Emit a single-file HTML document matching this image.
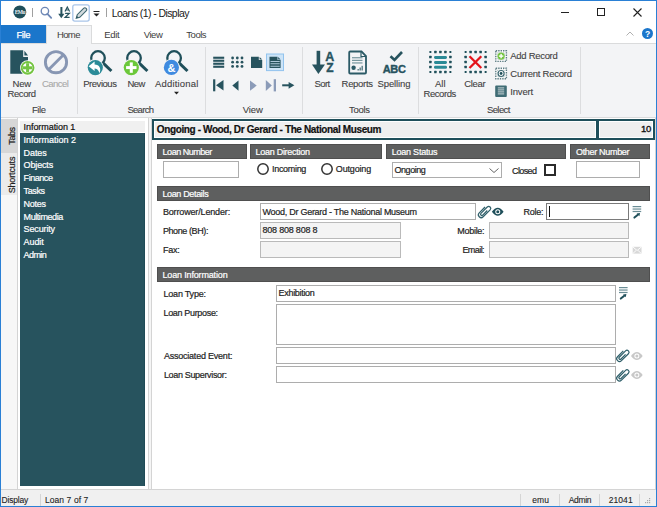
<!DOCTYPE html>
<html><head><meta charset="utf-8">
<style>
*{margin:0;padding:0;box-sizing:border-box}
html,body{width:657px;height:507px;overflow:hidden;background:#fff;font-family:"Liberation Sans",sans-serif}
.a{position:absolute}
.t{position:absolute;white-space:nowrap;line-height:12px;z-index:5;-webkit-text-stroke:0.2px currentColor}
.sep{position:absolute;width:1px;background:#dcdddf}
.bar{position:absolute;height:15px;background:#5e5f5f;border:1px solid #4f4f4f}
.in{position:absolute;border:1px solid #adadad;background:#fff}
.dis{background:#f4f4f4;border-color:#bababa}
svg{position:absolute;overflow:visible}
</style></head><body>
<div class="a" style="left:0;top:0;width:657px;height:507px;border:1px solid #2a80d5;z-index:50"></div>
<!-- TITLE BAR -->
<svg style="left:13px;top:5px" width="14" height="14" viewBox="0 0 14 14"><circle cx="6.8" cy="6.9" r="6.5" fill="#1f4f5a"/><text x="6.8" y="9" font-size="5.6" font-family="Liberation Serif" font-weight="bold" fill="#e8eef0" text-anchor="middle" letter-spacing="-0.6">EMu</text></svg>
<div class="sep" style="left:32px;top:8px;height:9px;background:#a0a0a0"></div>
<svg style="left:40px;top:7px" width="13" height="12" viewBox="0 0 13 12"><circle cx="4.9" cy="4.1" r="3.7" fill="none" stroke="#6d87b5" stroke-width="1.35"/><line x1="7.4" y1="6.9" x2="11.2" y2="10.8" stroke="#6d87b5" stroke-width="1.8" stroke-linecap="round"/></svg>
<svg style="left:0;top:0" width="120" height="25" viewBox="0 0 120 25">
<rect x="60.4" y="7" width="2" height="8" fill="#27535e"/><path d="M58.2 13.8H64.4L61.3 18.2Z" fill="#27535e"/>
<path d="M65 11.6L67.3 7.1L69.6 11.6M65.9 10H68.7" fill="none" stroke="#27535e" stroke-width="1.2"/>
<path d="M65.1 13.3H69.4L65.1 17.3H69.6" fill="none" stroke="#27535e" stroke-width="1.2"/>
<rect x="72.8" y="4.8" width="16.4" height="16.3" rx="2" fill="#fff" stroke="#a9c5e9" stroke-width="1.3"/>
<path d="M76.2 18.3L77.23 14.73L83.59 8.37Q84.86 7.1 86.13 8.37Q87.4 9.64 86.13 10.91L79.77 17.27Z" fill="#d3dadd" stroke="#3d6670" stroke-width="1.1"/>
<path d="M76.2 18.3L76.9 15.9L78.6 17.6Z" fill="#27535e"/>
</svg>
<svg style="left:93px;top:11px" width="7" height="6" viewBox="0 0 7 6"><rect x="0.5" y="0" width="6" height="1" fill="#222"/><path d="M0.5 2.5H6.5L3.5 5.5Z" fill="#222"/></svg>
<div class="sep" style="left:106px;top:8px;height:9px;background:#a0a0a0"></div>
<div class="a" style="left:561px;top:12px;width:8px;height:1px;background:#222"></div>
<div class="a" style="left:597px;top:8px;width:8px;height:8px;border:1px solid #222"></div>
<svg style="left:633px;top:8px" width="9" height="9" viewBox="0 0 9 9"><path d="M0.5 0.5L8.5 8.5M8.5 0.5L0.5 8.5" stroke="#222" stroke-width="1.1"/></svg>
<!-- TAB ROW -->
<div class="a" style="left:1px;top:25px;width:46px;height:18px;background:#1b76cb"></div>
<div class="a" style="left:46px;top:25px;width:46px;height:19px;background:#f3f4f6;border:1px solid #dadbdc;border-bottom:none;z-index:2"></div>
<svg style="left:626px;top:31px" width="8" height="5" viewBox="0 0 8 5"><path d="M0.5 4.5L4 1L7.5 4.5" fill="none" stroke="#b0b0b0" stroke-width="1"/></svg>
<svg style="left:642px;top:28px" width="11" height="11" viewBox="0 0 11 11"><circle cx="5.5" cy="5.5" r="5.5" fill="#1b76cb"/><text x="5.5" y="9" font-size="8.5" font-weight="bold" fill="#fff" text-anchor="middle">?</text></svg>
<!-- RIBBON -->
<div class="a" style="left:1px;top:43px;width:655px;height:75px;background:#f3f4f6;border-top:1px solid #dadbdc;border-bottom:1px solid #dadbdc"></div>
<div class="sep" style="left:77px;top:47px;height:67px"></div>
<div class="sep" style="left:205px;top:47px;height:67px"></div>
<div class="sep" style="left:302px;top:47px;height:67px"></div>
<div class="sep" style="left:418px;top:47px;height:67px"></div>
<div class="sep" style="left:580px;top:47px;height:67px"></div>
<svg style="left:0;top:0;z-index:6" width="657" height="507" viewBox="0 0 657 507">
<!-- New Record -->
<path d="M10.3 50.3H23.2V57H28V73.7H10.3Z" fill="#27535e"/>
<path d="M24.4 50.8L28 55.4H24.4Z" fill="#27535e"/>
<circle cx="27.6" cy="67.8" r="7.6" fill="#fff"/>
<circle cx="27.6" cy="67.8" r="5.9" fill="#fff" stroke="#74c442" stroke-width="2"/>
<rect x="23" y="66.3" width="9.2" height="3" fill="#74c442"/>
<rect x="26.1" y="63.2" width="3" height="9.2" fill="#74c442"/>
<!-- Cancel -->
<circle cx="56" cy="62.2" r="10.6" fill="none" stroke="#8796b3" stroke-width="2.9"/>
<line x1="63.5" y1="54.7" x2="48.5" y2="69.7" stroke="#8796b3" stroke-width="2.9"/>
<!-- magnifiers -->
<g fill="none" stroke="#1f4f5a">
<circle cx="98" cy="58" r="6.8" stroke-width="2.3"/><line x1="103.2" y1="63.2" x2="111.4" y2="71" stroke-width="3"/>
<circle cx="134" cy="58" r="6.8" stroke-width="2.3"/><line x1="139.2" y1="63.2" x2="147.4" y2="71" stroke-width="3"/>
<circle cx="174.1" cy="58" r="6.8" stroke-width="2.3"/><line x1="179.3" y1="63.2" x2="187.5" y2="71" stroke-width="3"/>
</g>
<circle cx="95.3" cy="67.6" r="8.5" fill="#f3f4f6"/><circle cx="95.3" cy="67.6" r="7.6" fill="#2b8b98"/>
<path d="M88.6 66.2L94.6 61.6V64.4C99.5 64.4 101.5 68.5 99.5 73.2C98.5 70 96.5 68.6 94.6 68.6V71Z" fill="#fff"/>
<circle cx="131.3" cy="67.6" r="8.5" fill="#f3f4f6"/><circle cx="131.3" cy="67.6" r="7.6" fill="#6cc83a"/>
<rect x="126.1" y="66.1" width="10.4" height="3" fill="#fff"/><rect x="129.8" y="62.4" width="3" height="10.4" fill="#fff"/>
<circle cx="171.4" cy="67.4" r="8.5" fill="#f3f4f6"/><circle cx="171.4" cy="67.4" r="7.6" fill="#3f8ae0"/>
<text x="171.6" y="71.8" font-size="11" font-weight="bold" fill="#fff" text-anchor="middle">&amp;</text>
<path d="M174 91.8H179L176.5 94.5Z" fill="#222"/>
<!-- view icons -->
<g fill="#27535e">
<rect x="213.2" y="56.7" width="11" height="2.1"/><rect x="213.2" y="59.7" width="11" height="2.1"/><rect x="213.2" y="62.7" width="11" height="2.1"/><rect x="213.2" y="65.7" width="11" height="2.1"/>
<circle cx="232.6" cy="58" r="1.4"/><circle cx="237.3" cy="58" r="1.4"/><circle cx="242" cy="58" r="1.4"/>
<circle cx="232.6" cy="62.2" r="1.4"/><circle cx="237.3" cy="62.2" r="1.4"/><circle cx="242" cy="62.2" r="1.4"/>
<circle cx="232.6" cy="66.4" r="1.4"/><circle cx="237.3" cy="66.4" r="1.4"/><circle cx="242" cy="66.4" r="1.4"/>
<path d="M251 56.8H258.8V60H262.2V68H251Z"/><path d="M259.6 57L262.2 59.4H259.6Z"/>
</g>
<rect x="266.5" y="54" width="17" height="16.6" fill="#cde4f7" stroke="#92c3ee" stroke-width="1"/>
<g fill="#27535e">
<path d="M269.5 56.8H277.5V60H280.6V68H269.5Z"/><path d="M278.2 57L280.6 59.4H278.2Z"/>
</g>
<g fill="#cde4f7"><rect x="270.5" y="61" width="9.2" height="0.8"/><rect x="270.5" y="63.4" width="9.2" height="0.8"/><rect x="270.5" y="65.8" width="9.2" height="0.8"/></g>
<g fill="#27535e">
<rect x="213.1" y="79.3" width="2.2" height="12"/><path d="M223.5 80V90.5L216 85.3Z"/>
<path d="M238.5 80.4V90.8L232.3 85.6Z"/>
<rect x="282.2" y="84.3" width="8" height="2"/><path d="M288.6 81.9L294.4 85.3L288.6 88.7Z"/>
</g>
<g fill="#8b9bb8">
<path d="M250 80.4V90.8L256.7 85.6Z"/>
<path d="M265.8 79.9V91L271.8 85.4Z"/><rect x="273.7" y="79.2" width="2.3" height="12.2"/>
</g>
<!-- tools -->
<g fill="#27535e">
<rect x="316.6" y="50.8" width="3.6" height="15"/><path d="M312 64.6H325L318.4 74Z"/>
</g>
<text x="329.8" y="60.8" font-size="12.5" font-weight="bold" fill="#27535e" stroke="#27535e" stroke-width="0.35" text-anchor="middle">A</text>
<text x="329.8" y="71.6" font-size="12" font-weight="bold" fill="#27535e" stroke="#27535e" stroke-width="0.35" text-anchor="middle">Z</text>
<path d="M349.2 52.5Q349.2 51.5 350.2 51.5H361.5L366 56V72.5Q366 73.5 365 73.5H350.2Q349.2 73.5 349.2 72.5Z" fill="none" stroke="#2b5a66" stroke-width="1.8"/>
<path d="M361 51.5V56.5H366" fill="none" stroke="#2b5a66" stroke-width="1.2"/>
<g fill="#6a8d95"><rect x="352" y="57.2" width="10.5" height="1.1"/><rect x="352" y="59.8" width="10.5" height="1.1"/><rect x="352" y="62.4" width="10.5" height="1.1"/></g>
<circle cx="353.6" cy="67.8" r="2.2" fill="#2b5a66"/>
<g fill="#2b5a66"><rect x="357.6" y="69" width="1.1" height="1.5"/><rect x="359.6" y="67.5" width="1.1" height="3"/><rect x="361.6" y="65.8" width="1.1" height="4.7"/></g>
<path d="M390.5 56.3L394.5 60L402 52" fill="none" stroke="#27535e" stroke-width="2.6"/>
<text x="394.2" y="72.6" font-size="11" font-weight="bold" fill="#27535e" stroke="#27535e" stroke-width="0.4" text-anchor="middle" letter-spacing="-0.3">ABC</text>
<!-- select -->
<g fill="#1f4f5a"><rect x="429.40" y="51.10" width="2.0" height="2.0" rx="0.5"/><rect x="429.15" y="55.85" width="2.5" height="2.5" rx="0.5"/><rect x="429.15" y="60.85" width="2.5" height="2.5" rx="0.5"/><rect x="429.15" y="65.85" width="2.5" height="2.5" rx="0.5"/><rect x="429.40" y="71.10" width="2.0" height="2.0" rx="0.5"/><rect x="434.15" y="50.85" width="2.5" height="2.5" rx="0.5"/><rect x="434.15" y="70.85" width="2.5" height="2.5" rx="0.5"/><rect x="439.15" y="50.85" width="2.5" height="2.5" rx="0.5"/><rect x="439.15" y="70.85" width="2.5" height="2.5" rx="0.5"/><rect x="444.15" y="50.85" width="2.5" height="2.5" rx="0.5"/><rect x="444.15" y="70.85" width="2.5" height="2.5" rx="0.5"/><rect x="449.40" y="51.10" width="2.0" height="2.0" rx="0.5"/><rect x="449.15" y="55.85" width="2.5" height="2.5" rx="0.5"/><rect x="449.15" y="60.85" width="2.5" height="2.5" rx="0.5"/><rect x="449.15" y="65.85" width="2.5" height="2.5" rx="0.5"/><rect x="449.40" y="71.10" width="2.0" height="2.0" rx="0.5"/><rect x="464.60" y="51.10" width="2.0" height="2.0" rx="0.5"/><rect x="464.35" y="55.85" width="2.5" height="2.5" rx="0.5"/><rect x="464.35" y="60.85" width="2.5" height="2.5" rx="0.5"/><rect x="464.35" y="65.85" width="2.5" height="2.5" rx="0.5"/><rect x="464.60" y="71.10" width="2.0" height="2.0" rx="0.5"/><rect x="469.35" y="50.85" width="2.5" height="2.5" rx="0.5"/><rect x="469.35" y="70.85" width="2.5" height="2.5" rx="0.5"/><rect x="474.35" y="50.85" width="2.5" height="2.5" rx="0.5"/><rect x="474.35" y="70.85" width="2.5" height="2.5" rx="0.5"/><rect x="479.35" y="50.85" width="2.5" height="2.5" rx="0.5"/><rect x="479.35" y="70.85" width="2.5" height="2.5" rx="0.5"/><rect x="484.60" y="51.10" width="2.0" height="2.0" rx="0.5"/><rect x="484.35" y="55.85" width="2.5" height="2.5" rx="0.5"/><rect x="484.35" y="60.85" width="2.5" height="2.5" rx="0.5"/><rect x="484.35" y="65.85" width="2.5" height="2.5" rx="0.5"/><rect x="484.60" y="71.10" width="2.0" height="2.0" rx="0.5"/></g>
<g fill="#2a8a96"><rect x="434" y="56" width="13" height="3" rx="1.4"/><rect x="434" y="61" width="13" height="3" rx="1.4"/><rect x="434" y="65.8" width="13" height="3" rx="1.4"/></g>
<path d="M469.5 56.3L481.3 68M481.3 56.3L469.5 68" stroke="#e3141b" stroke-width="2.3"/>
<rect x="495.8" y="50.8" width="10.6" height="10.6" fill="#fff" stroke="#5d7d84" stroke-width="1.4" stroke-dasharray="1.4 1"/><rect x="497.6" y="52.6" width="7" height="7" fill="none" stroke="#b9c7ca" stroke-width="0.9" stroke-dasharray="1 0.8"/>
<circle cx="501.1" cy="56.1" r="3.6" fill="#74c442"/><rect x="498.9" y="55.4" width="4.4" height="1.4" fill="#fff"/><rect x="500.4" y="53.9" width="1.4" height="4.4" fill="#fff"/>
<rect x="495.8" y="68.2" width="10.6" height="10.6" fill="#fff" stroke="#5d7d84" stroke-width="1.4" stroke-dasharray="1.4 1"/><rect x="497.6" y="70" width="7" height="7" fill="none" stroke="#b9c7ca" stroke-width="0.9" stroke-dasharray="1 0.8"/>
<circle cx="501.1" cy="73.5" r="3" fill="none" stroke="#3a6670" stroke-width="1.1"/><circle cx="501.1" cy="73.5" r="1.4" fill="#1f4f5a"/>
<rect x="495.2" y="85.4" width="11.6" height="11.6" rx="1" fill="#3f6c75"/>
<g fill="#c9d5d7"><rect x="497.8" y="87.4" width="6.4" height="1"/><rect x="497.8" y="89.4" width="6.4" height="1"/><rect x="497.8" y="91.4" width="6.4" height="1"/><rect x="497.8" y="93.4" width="6.4" height="1"/></g>
</svg>

<!-- WORKSPACE -->
<div class="a" style="left:1px;top:118px;width:655px;height:371px;background:#f5f5f5"></div>
<div class="a" style="left:1px;top:118px;width:16px;height:371px;background:#f7f7f7"></div>
<div class="a" style="left:1px;top:118px;width:16px;height:1px;background:#fafafa"></div>
<div class="a" style="left:1px;top:119px;width:16px;height:34px;background:#d7d7d7"></div>
<div class="a" style="left:1px;top:153px;width:16px;height:42px;background:#ebebeb"></div>
<div class="t" style="left:-6px;top:130px;width:36px;height:12px;text-align:center;transform:rotate(-90deg);color:#222;font-size:9px;letter-spacing:-0.4px">Tabs</div>
<div class="t" style="left:-11px;top:169px;width:46px;height:12px;text-align:center;transform:rotate(-90deg);color:#222;font-size:9px;letter-spacing:-0.15px">Shortcuts</div>
<div class="a" style="left:17px;top:118px;width:132px;height:372px;background:#fff;border:1px solid #d4d4d4;border-top:none"></div>
<div class="a" style="left:20px;top:121px;width:125px;height:11px;background:#f0f0f0"></div>
<div class="a" style="left:20px;top:133px;width:125px;height:353px;background:#27535e;box-shadow:inset -1px 0 0 #1f4a55"></div>
<!-- FORM -->
<div class="a" style="left:151px;top:118px;width:505px;height:372px;background:#fff;border:1px solid #d4d4d4;border-top:none"></div>
<div class="a" style="left:152px;top:119px;width:446px;height:21px;background:#efefef;border:2px solid #1f4f5a;box-shadow:inset 0 0 0 1px #fff"></div>
<div class="a" style="left:597px;top:119px;width:58px;height:21px;background:#efefef;border:2px solid #1f4f5a;box-shadow:inset 0 0 0 1px #fff"></div>
<div class="bar" style="left:157px;top:144px;width:90px"></div>
<div class="bar" style="left:250px;top:144px;width:132px"></div>
<div class="bar" style="left:386px;top:144px;width:180px"></div>
<div class="bar" style="left:570px;top:144px;width:80px"></div>
<div class="in" style="left:163px;top:161px;width:76px;height:17px"></div>
<svg style="left:257px;top:163px" width="12" height="12" viewBox="0 0 12 12"><circle cx="6" cy="6" r="5.2" fill="#fff" stroke="#333" stroke-width="1.5"/></svg>
<svg style="left:321px;top:163px" width="12" height="12" viewBox="0 0 12 12"><circle cx="6" cy="6" r="5.2" fill="#fff" stroke="#333" stroke-width="1.5"/></svg>
<div class="in" style="left:392px;top:162px;width:110px;height:16px"></div>
<svg style="left:489px;top:168px" width="10" height="5" viewBox="0 0 10 5"><path d="M0.5 0.5L5 4.5L9.5 0.5" fill="none" stroke="#666" stroke-width="1"/></svg>
<div class="a" style="left:544px;top:164px;width:12px;height:12px;border:2px solid #2b2b2b;background:#fff"></div>
<div class="in" style="left:576px;top:161px;width:64px;height:17px"></div>
<div class="bar" style="left:157px;top:186px;width:493px"></div>
<div class="in" style="left:260px;top:203px;width:216px;height:17px"></div>
<div class="in" style="left:546px;top:203px;width:83px;height:17px;border-color:#7a7a7a"></div>
<div class="a" style="left:549px;top:206px;width:1px;height:11px;background:#111"></div>
<div class="in dis" style="left:260px;top:222px;width:141px;height:17px"></div>
<div class="in dis" style="left:489px;top:222px;width:140px;height:17px"></div>
<div class="in dis" style="left:260px;top:241px;width:141px;height:17px"></div>
<div class="in dis" style="left:489px;top:241px;width:140px;height:17px"></div>
<div class="bar" style="left:157px;top:267px;width:493px"></div>
<div class="in" style="left:276px;top:285px;width:340px;height:17px"></div>
<div class="in" style="left:276px;top:304px;width:340px;height:41px"></div>
<div class="in" style="left:276px;top:347px;width:340px;height:17px"></div>
<div class="in" style="left:276px;top:366px;width:340px;height:17px"></div>
<svg style="left:0;top:0;z-index:6" width="657" height="507" viewBox="0 0 657 507">
<defs>
<g id="clip"><path transform="rotate(45) scale(0.86) translate(-3.25,-8.75)" d="M0 4.5V14A3.25 3.25 0 0 0 6.5 14V2.6A2.35 2.35 0 0 0 1.8 2.6V13A1.45 1.45 0 0 0 4.7 13V5.5" fill="none" stroke="#2f5f6a" stroke-width="1.4"/></g>
<g id="eye"><path d="M0 4Q5.85 -4 11.7 4Q5.85 12 0 4Z"/><circle cx="5.85" cy="4" r="2.5" fill="#fff"/><circle cx="5.85" cy="4" r="1.5"/></g>
<g id="look"><rect x="0.2" y="0" width="8.6" height="1.2" fill="#6a8d95"/><rect x="0.2" y="2.45" width="8.6" height="1.2" fill="#6a8d95"/><rect x="0.2" y="4.9" width="8.6" height="1.2" fill="#6a8d95"/><path d="M2 11.6L5.2 8.9" stroke="#1f4f5a" stroke-width="2" stroke-linecap="round"/><path d="M4.2 7.6L7.6 7L7 10.3Z" fill="#1f4f5a"/></g>
</defs>
<use href="#clip" x="484.4" y="211.6"/>
<use href="#eye" x="491.9" y="207.8" fill="#1f4f5a"/>
<use href="#look" x="632.4" y="206"/>
<use href="#look" x="618.8" y="287"/>
<use href="#clip" x="622.7" y="355.5"/>
<use href="#eye" x="631" y="352" fill="#c8c8c8"/>
<use href="#clip" x="622.7" y="375"/>
<use href="#eye" x="631" y="370.9" fill="#c8c8c8"/>
<rect x="632.7" y="246.8" width="8.8" height="6.8" fill="#d8d8d8"/>
<path d="M632.9 247L637.1 250.5L641.3 247M632.9 253.5L636 250.6M641.3 253.5L638.2 250.6" fill="none" stroke="#fff" stroke-width="0.9"/>
</svg>

<!-- STATUS BAR -->
<div class="a" style="left:1px;top:489px;width:655px;height:17px;background:#f0f0f0;border-top:1px solid #d4d4d4"></div>
<div class="sep" style="left:40px;top:494px;height:12px;background:#d5d5d5"></div>
<div class="sep" style="left:520px;top:494px;height:12px;background:#d5d5d5"></div>
<div class="sep" style="left:559px;top:494px;height:12px;background:#d5d5d5"></div>
<div class="sep" style="left:599px;top:494px;height:12px;background:#d5d5d5"></div>
<div class="sep" style="left:639px;top:494px;height:12px;background:#d5d5d5"></div>
<svg style="left:0;top:0;z-index:6" width="657" height="507" viewBox="0 0 657 507"><g fill="#a8a8a8"><rect x="649" y="498" width="1.2" height="1.2"/><rect x="647" y="500" width="1.2" height="1.2"/><rect x="649" y="500" width="1.2" height="1.2"/><rect x="645" y="502" width="1.2" height="1.2"/><rect x="647" y="502" width="1.2" height="1.2"/><rect x="649" y="502" width="1.2" height="1.2"/></g></svg>
<div class="t" style="left:111.70px;top:7.00px;font-size:10.5px;letter-spacing:-0.578px;color:#1a1a1a;-webkit-text-stroke:0;">Loans (1) - Display</div>
<div class="t" style="left:16.40px;top:29.00px;font-size:9.5px;letter-spacing:-0.400px;color:#fff;-webkit-text-stroke:0.25px #fff;">File</div>
<div class="t" style="left:56.90px;top:29.00px;font-size:9.5px;letter-spacing:-0.600px;color:#3c3c3c;-webkit-text-stroke:0;">Home</div>
<div class="t" style="left:104.30px;top:29.00px;font-size:9.5px;letter-spacing:-0.367px;color:#3c3c3c;-webkit-text-stroke:0;">Edit</div>
<div class="t" style="left:143.70px;top:29.00px;font-size:9.5px;letter-spacing:-0.433px;color:#3c3c3c;-webkit-text-stroke:0;">View</div>
<div class="t" style="left:186.30px;top:29.00px;font-size:9.5px;letter-spacing:-0.475px;color:#3c3c3c;-webkit-text-stroke:0;">Tools</div>
<div class="t" style="left:12.60px;top:78.00px;font-size:9.5px;letter-spacing:-0.300px;color:#3f3f3f;-webkit-text-stroke:0.1px;">New</div>
<div class="t" style="left:7.50px;top:88.00px;font-size:9.5px;letter-spacing:-0.420px;color:#3f3f3f;-webkit-text-stroke:0.1px;">Record</div>
<div class="t" style="left:32.00px;top:104.00px;font-size:9.5px;letter-spacing:-0.433px;color:#3f3f3f;-webkit-text-stroke:0.1px;">File</div>
<div class="t" style="left:83.20px;top:78.00px;font-size:9.5px;letter-spacing:-0.457px;color:#3f3f3f;-webkit-text-stroke:0.1px;">Previous</div>
<div class="t" style="left:127.40px;top:78.00px;font-size:9.5px;letter-spacing:-0.550px;color:#3f3f3f;-webkit-text-stroke:0.1px;">New</div>
<div class="t" style="left:155.00px;top:78.00px;font-size:9.5px;letter-spacing:0.178px;color:#3f3f3f;-webkit-text-stroke:0.1px;">Additional</div>
<div class="t" style="left:127.40px;top:104.00px;font-size:9.5px;letter-spacing:-0.700px;color:#3f3f3f;-webkit-text-stroke:0.1px;">Search</div>
<div class="t" style="left:242.80px;top:104.00px;font-size:9.5px;letter-spacing:-0.133px;color:#3f3f3f;-webkit-text-stroke:0.1px;">View</div>
<div class="t" style="left:314.60px;top:78.00px;font-size:9.5px;letter-spacing:-0.633px;color:#3f3f3f;-webkit-text-stroke:0.1px;">Sort</div>
<div class="t" style="left:341.60px;top:78.00px;font-size:9.5px;letter-spacing:-0.317px;color:#3f3f3f;-webkit-text-stroke:0.1px;">Reports</div>
<div class="t" style="left:377.60px;top:78.00px;font-size:9.5px;letter-spacing:-0.129px;color:#3f3f3f;-webkit-text-stroke:0.1px;">Spelling</div>
<div class="t" style="left:349.00px;top:104.00px;font-size:9.5px;letter-spacing:-0.300px;color:#3f3f3f;-webkit-text-stroke:0.1px;">Tools</div>
<div class="t" style="left:435.00px;top:78.00px;font-size:9.5px;letter-spacing:0.000px;color:#3f3f3f;-webkit-text-stroke:0.1px;">All</div>
<div class="t" style="left:423.50px;top:88.00px;font-size:9.5px;letter-spacing:-0.433px;color:#3f3f3f;-webkit-text-stroke:0.1px;">Records</div>
<div class="t" style="left:464.30px;top:78.00px;font-size:9.5px;letter-spacing:-0.350px;color:#3f3f3f;-webkit-text-stroke:0.1px;">Clear</div>
<div class="t" style="left:486.90px;top:104.00px;font-size:9.5px;letter-spacing:-0.580px;color:#3f3f3f;-webkit-text-stroke:0.1px;">Select</div>
<div class="t" style="left:510.30px;top:50.00px;font-size:9.5px;letter-spacing:-0.300px;color:#3f3f3f;-webkit-text-stroke:0.1px;">Add Record</div>
<div class="t" style="left:510.30px;top:68.00px;font-size:9.5px;letter-spacing:-0.254px;color:#3f3f3f;-webkit-text-stroke:0.1px;">Current Record</div>
<div class="t" style="left:510.30px;top:86.00px;font-size:9.5px;letter-spacing:-0.180px;color:#3f3f3f;-webkit-text-stroke:0.1px;">Invert</div>
<div class="t" style="left:42.00px;top:78.00px;font-size:9.5px;letter-spacing:-0.560px;color:#a8a8a8;-webkit-text-stroke:0.1px;">Cancel</div>
<div class="t" style="left:23.60px;top:121.00px;font-size:9px;letter-spacing:-0.067px;color:#111;">Information 1</div>
<div class="t" style="left:23.60px;top:134.00px;font-size:9px;letter-spacing:-0.017px;color:#fff;">Information 2</div>
<div class="t" style="left:23.60px;top:147.00px;font-size:9px;letter-spacing:-0.075px;color:#fff;">Dates</div>
<div class="t" style="left:23.60px;top:159.00px;font-size:9px;letter-spacing:-0.150px;color:#fff;">Objects</div>
<div class="t" style="left:23.60px;top:172.00px;font-size:9px;letter-spacing:-0.450px;color:#fff;">Finance</div>
<div class="t" style="left:23.60px;top:185.00px;font-size:9px;letter-spacing:-0.400px;color:#fff;">Tasks</div>
<div class="t" style="left:23.60px;top:198.00px;font-size:9px;letter-spacing:-0.300px;color:#fff;">Notes</div>
<div class="t" style="left:23.60px;top:211.00px;font-size:9px;letter-spacing:-0.433px;color:#fff;">Multimedia</div>
<div class="t" style="left:23.60px;top:223.00px;font-size:9px;letter-spacing:-0.143px;color:#fff;">Security</div>
<div class="t" style="left:23.60px;top:236.00px;font-size:9px;letter-spacing:-0.100px;color:#fff;">Audit</div>
<div class="t" style="left:23.60px;top:249.00px;font-size:9px;letter-spacing:-0.575px;color:#fff;">Admin</div>
<div class="t" style="left:156.80px;top:124.00px;font-size:10px;letter-spacing:-0.378px;color:#111;font-weight:bold;">Ongoing - Wood, Dr Gerard - The National Museum</div>
<div class="t" style="left:641.00px;top:123.00px;font-size:9.5px;letter-spacing:0.000px;color:#111;-webkit-text-stroke:0.35px #111;letter-spacing:-0.2px;">10</div>
<div class="t" style="left:162.60px;top:146.00px;font-size:9px;letter-spacing:-0.480px;color:#fff;">Loan Number</div>
<div class="t" style="left:255.60px;top:146.00px;font-size:9px;letter-spacing:-0.285px;color:#fff;">Loan Direction</div>
<div class="t" style="left:391.70px;top:146.00px;font-size:9px;letter-spacing:-0.220px;color:#fff;">Loan Status</div>
<div class="t" style="left:576.00px;top:146.00px;font-size:9px;letter-spacing:-0.318px;color:#fff;">Other Number</div>
<div class="t" style="left:162.40px;top:188.00px;font-size:9px;letter-spacing:-0.345px;color:#fff;">Loan Details</div>
<div class="t" style="left:162.50px;top:269.00px;font-size:9px;letter-spacing:-0.160px;color:#fff;">Loan Information</div>
<div class="t" style="left:272.10px;top:163.00px;font-size:9px;letter-spacing:-0.329px;color:#1e1e1e;">Incoming</div>
<div class="t" style="left:335.80px;top:163.00px;font-size:9px;letter-spacing:-0.157px;color:#1e1e1e;">Outgoing</div>
<div class="t" style="left:394.50px;top:164.00px;font-size:9px;letter-spacing:-0.450px;color:#1e1e1e;">Ongoing</div>
<div class="t" style="left:512.00px;top:165.00px;font-size:9px;letter-spacing:-0.600px;color:#1e1e1e;">Closed</div>
<div class="t" style="left:162.90px;top:206.00px;font-size:9px;letter-spacing:-0.153px;color:#1e1e1e;">Borrower/Lender:</div>
<div class="t" style="left:262.50px;top:206.00px;font-size:9px;letter-spacing:-0.269px;color:#1e1e1e;">Wood, Dr Gerard - The National Museum</div>
<div class="t" style="left:523.50px;top:206.00px;font-size:9px;letter-spacing:-0.275px;color:#1e1e1e;">Role:</div>
<div class="t" style="left:162.90px;top:225.00px;font-size:9px;letter-spacing:-0.400px;color:#1e1e1e;">Phone (BH):</div>
<div class="t" style="left:262.50px;top:224.00px;font-size:9px;letter-spacing:-0.208px;color:#1e1e1e;">808 808 808 8</div>
<div class="t" style="left:457.20px;top:225.00px;font-size:9px;letter-spacing:-0.267px;color:#1e1e1e;">Mobile:</div>
<div class="t" style="left:162.90px;top:244.00px;font-size:9px;letter-spacing:-0.233px;color:#1e1e1e;">Fax:</div>
<div class="t" style="left:462.40px;top:244.00px;font-size:9px;letter-spacing:-0.560px;color:#1e1e1e;">Email:</div>
<div class="t" style="left:163.50px;top:288.00px;font-size:9px;letter-spacing:-0.211px;color:#1e1e1e;">Loan Type:</div>
<div class="t" style="left:278.60px;top:287.00px;font-size:9px;letter-spacing:-0.311px;color:#1e1e1e;">Exhibition</div>
<div class="t" style="left:163.50px;top:307.00px;font-size:9px;letter-spacing:-0.333px;color:#1e1e1e;">Loan Purpose:</div>
<div class="t" style="left:163.90px;top:350.00px;font-size:9px;letter-spacing:-0.219px;color:#1e1e1e;">Associated Event:</div>
<div class="t" style="left:163.90px;top:369.00px;font-size:9px;letter-spacing:-0.333px;color:#1e1e1e;">Loan Supervisor:</div>
<div class="t" style="left:1.50px;top:494.00px;font-size:8.5px;letter-spacing:-0.200px;color:#222;-webkit-text-stroke:0.1px;">Display</div>
<div class="t" style="left:44.90px;top:494.00px;font-size:8.5px;letter-spacing:0.090px;color:#222;-webkit-text-stroke:0.1px;">Loan 7 of 7</div>
<div class="t" style="left:532.30px;top:494.00px;font-size:8.5px;letter-spacing:0.100px;color:#222;-webkit-text-stroke:0.1px;">emu</div>
<div class="t" style="left:568.80px;top:494.00px;font-size:8.5px;letter-spacing:-0.350px;color:#222;-webkit-text-stroke:0.1px;">Admin</div>
<div class="t" style="left:608.70px;top:494.00px;font-size:8.5px;letter-spacing:0.075px;color:#222;-webkit-text-stroke:0.1px;">21041</div>

</body></html>
